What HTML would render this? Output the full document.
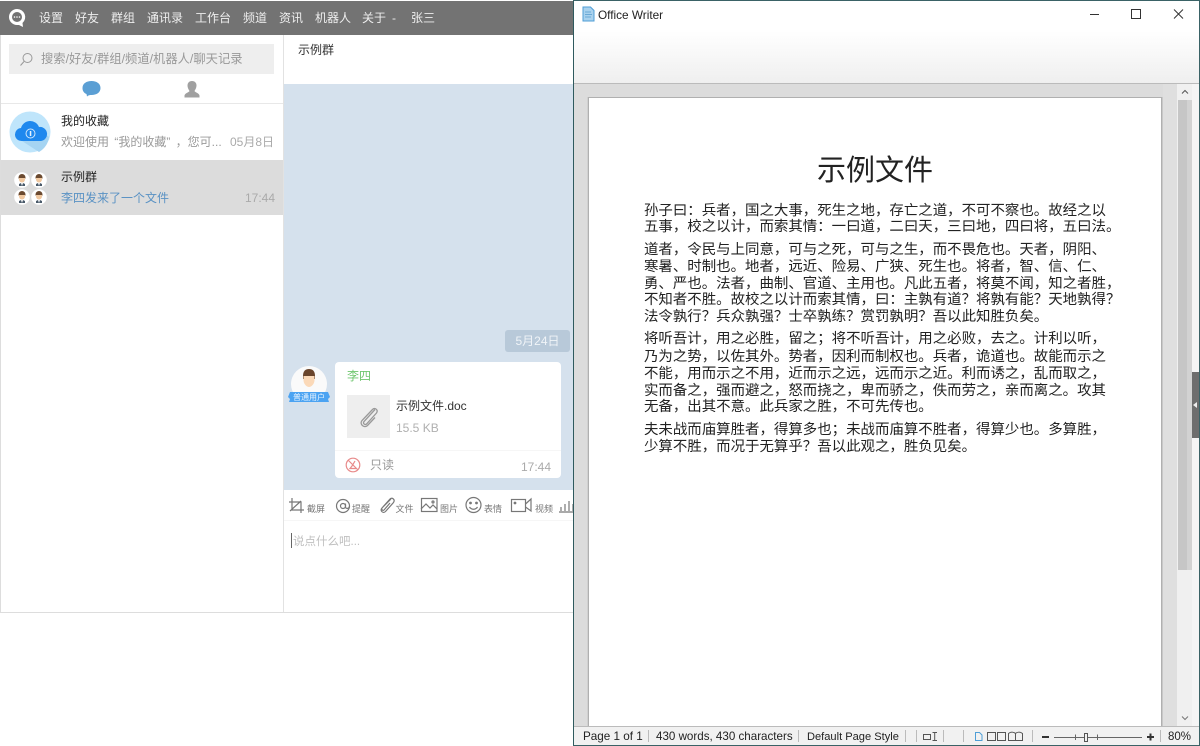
<!DOCTYPE html>
<html><head><meta charset="utf-8"><style>
html,body{margin:0;padding:0;background:#fff}
body{width:1200px;height:746px;position:relative;overflow:hidden;font-family:"Liberation Sans","Noto Sans CJK SC",sans-serif}
.a{position:absolute;white-space:nowrap}
.n{top:10px;font-size:12px;line-height:16px;color:#eee}
.l{left:644px;font-size:14.44px;line-height:17px;color:#222}
.t{font-size:9px;color:#777;top:504px;line-height:10px}
</style></head><body>
<div class="a" style="left:0;top:1px;width:574px;height:34px;background:#737373"></div>
<svg class="a" style="left:8px;top:8px" width="20" height="22" viewBox="0 0 20 22"><path d="M9 1a8 8 0 1 0 0 16l2 0 4 2-.5-4a8 8 0 0 0-5.500-14z" fill="#fff"/><circle cx="9" cy="9" r="5" fill="#737373"/><circle cx="6.500" cy="9" r=".8" fill="#fff"/><circle cx="9" cy="9" r=".8" fill="#fff"/><circle cx="11.500" cy="9" r=".8" fill="#fff"/></svg>
<div class="a n" style="left:39px">设置</div><div class="a n" style="left:75px">好友</div><div class="a n" style="left:111px">群组</div><div class="a n" style="left:147px">通讯录</div><div class="a n" style="left:195px">工作台</div><div class="a n" style="left:243px">频道</div><div class="a n" style="left:279px">资讯</div><div class="a n" style="left:315px">机器人</div><div class="a n" style="left:362px">关于</div><div class="a n" style="left:392px">-</div><div class="a n" style="left:411px">张三</div>

<div class="a" style="left:0;top:35px;width:1px;height:577px;background:#ddd"></div>
<div class="a" style="left:283px;top:35px;width:1px;height:577px;background:#e2e2e2"></div>
<div class="a" style="left:0;top:612px;width:574px;height:1px;background:#ddd"></div>
<div class="a" style="left:9px;top:44px;width:265px;height:30px;background:#eee"></div>
<svg class="a" style="left:19px;top:52px" width="15" height="15" viewBox="0 0 15 15" fill="none" stroke="#999" stroke-width="1"><circle cx="8.500" cy="6" r="4.500"/><path d="M5 9.500 1.500 13.500"/></svg>
<div class="a" style="left:41px;top:51px;font-size:12.300px;line-height:17px;color:#999">搜索/好友/群组/频道/机器人/聊天记录</div>
<svg class="a" style="left:81px;top:80px" width="21" height="18" viewBox="0 0 21 18"><path d="M10.500 1C15.500 1 19.500 3.500 19.500 8s-4 7-9 7c-1.500 0-3 0-4.500 1.500l-.5-2.500C3 13 1.500 11 1.500 8 1.500 3.500 5.500 1 10.500 1z" fill="#5b9fd4"/></svg>
<svg class="a" style="left:184px;top:81px" width="16" height="17" viewBox="0 0 16 17"><path d="M8 0c3 0 4.500 2 4.500 4.500S11 9 10.500 10c0 1 4.500 2 5 4.500V16.500H.5V14.500c.5-2.500 5-3.500 5-4.500C5 9 3.500 7 3.500 4.500S5 0 8 0z" fill="#a0a0a0"/></svg>
<div class="a" style="left:1px;top:103px;width:282px;height:1px;background:#e8e8e8"></div>
<svg class="a" style="left:9px;top:111px" width="42" height="42" viewBox="0 0 42 42"><circle cx="21" cy="21" r="20.500" fill="#bfe5fb"/><path d="M13 30 30 41 A20.500 20.500 0 0 0 40 26L33 20Z" fill="#a5d4f2"/><path d="M13 30a6.500 6.500 0 0 1-1-13 9.500 9.500 0 0 1 18-1 7 7 0 0 1 2 14z" fill="#1e88ee"/><circle cx="21.500" cy="22.500" r="4.500" fill="none" stroke="#cfe6fb" stroke-width="1"/><rect x="20.800" y="20" width="1.500" height="5" fill="#eaf4fd"/></svg>
<div class="a" style="left:61px;top:113px;font-size:12px;line-height:17px;color:#222">我的收藏</div>
<div class="a" style="left:61px;top:134px;font-size:12px;line-height:17px;color:#9a9a9a;word-spacing:2px">欢迎使用 “我的收藏” ，您可...</div>
<div class="a" style="left:230px;top:134px;font-size:12px;line-height:17px;color:#aaa">05月8日</div>

<div class="a" style="left:1px;top:160px;width:282px;height:55px;background:#dcdcdc"></div>
<svg class="a" style="left:13px;top:171px" width="35" height="35" viewBox="0 0 35 35">
<defs><g id="p"><circle cx="8" cy="8" r="7.800" fill="#fff"/><path d="M4.500 5.500a3.500 3.500 0 0 1 7 0v1h-7z" fill="#6b4a30"/><path d="M5 6h6v1.500a3 3 0 0 1-6 0z" fill="#f0c8a0"/><path d="M5 12l2-1 1 3 1-3 2 1 0 2h-6z" fill="#4a5a6a"/></g></defs>
<use href="#p" x="1" y="1"/><use href="#p" x="18" y="1"/><use href="#p" x="1" y="18"/><use href="#p" x="18" y="18"/></svg>
<div class="a" style="left:61px;top:169px;font-size:12px;line-height:17px;color:#222">示例群</div>
<div class="a" style="left:61px;top:190px;font-size:12px;line-height:17px;color:#5a92c4">李四发来了一个文件</div>
<div class="a" style="left:245px;top:190px;font-size:12px;line-height:17px;color:#aaa">17:44</div>

<div class="a" style="left:298px;top:42px;font-size:12px;line-height:17px;color:#333">示例群</div>
<div class="a" style="left:284px;top:84px;width:290px;height:406px;background:#d5e1ed"></div>
<div class="a" style="left:505px;top:330px;width:65px;height:22px;background:#b8c9d9;border-radius:3px;font-size:12px;line-height:22px;text-align:center;color:#f0f4f8">5月24日</div>

<svg class="a" style="left:288px;top:365px" width="44" height="40" viewBox="0 0 44 40">
<circle cx="21" cy="19" r="18" fill="#fafafa"/><path d="M15 11c0-5 2.500-7 6-7s6 2 6 7v3H15z" fill="#6a452c"/><path d="M15.500 11c3 0 8 0 11 0v4c0 4-3 7-5.500 7s-5.500-3-5.500-7z" fill="#fbd9b8"/>
<path d="M2 27 0 32 2 34 1 37H41L40 34 42 32 40 27z" fill="#4ba3f2"/><text x="21" y="35" font-size="8" text-anchor="middle" fill="#e8f4ff" font-family="Liberation Sans,Noto Sans CJK SC,sans-serif">普通用户</text></svg>
<div class="a" style="left:335px;top:362px;width:226px;height:116px;background:#fff;border-radius:4px"></div>
<div class="a" style="left:347px;top:368px;font-size:12px;line-height:17px;color:#6ec66e">李四</div>
<div class="a" style="left:347px;top:395px;width:43px;height:43px;background:#eee"></div>
<svg class="a" style="left:358px;top:406px" width="22" height="22" viewBox="0 0 22 22" fill="none" stroke="#999" stroke-width="1.300"><path d="M17 3.500 6 15.500c-1.500 2 1 4 2.500 2.500L18.500 7c2-3-1.500-6-4-3.500L4 14.500c-3 4 2.500 8 5.500 5L17 11.500"/></svg>
<div class="a" style="left:396px;top:398px;font-size:12px;line-height:17px;color:#333">示例文件.doc</div>
<div class="a" style="left:396px;top:420px;font-size:12px;line-height:17px;color:#b0b0b0">15.5 KB</div>
<div class="a" style="left:335px;top:450px;width:226px;height:1px;background:#f6f6f6"></div>
<svg class="a" style="left:345px;top:457px" width="16" height="16" viewBox="0 0 16 16" fill="none" stroke="#e88a8a" stroke-width="1.200"><circle cx="8" cy="8" r="6.800"/><path d="M3 3 13 13M10 4 7 9 5 11.500H11"/></svg>
<div class="a" style="left:370px;top:457px;font-size:12px;line-height:17px;color:#999">只读</div>
<div class="a" style="left:521px;top:459px;font-size:12px;line-height:17px;color:#aaa">17:44</div>

<svg class="a" style="left:284px;top:494px" width="290" height="24" viewBox="0 0 290 24" fill="none" stroke="#777" stroke-width="1.200">
<path d="M8 4V16H20M5 8H17V19M6 17 17 7"/>
<circle cx="59" cy="12" r="6.500"/><circle cx="59" cy="12" r="2.500"/><path d="M61.500 9.500V13c0 2 4 2 4-1"/>
<path d="M107 5 98 14c-2.500 2.500 1 6 3.500 3.500l8-9c2-3-1.500-5.500-3.500-3.500l-8 9c-1 1.500 1 3 2 2l6-7"/>
<rect x="137.500" y="4.500" width="15.500" height="13"/><path d="M137 15 142 10 146 14 149 11 153 15"/><circle cx="149" cy="8" r="1"/>
<circle cx="189.500" cy="11" r="7.500"/><circle cx="186.500" cy="9" r=".8" fill="#777"/><circle cx="192.500" cy="9" r=".8" fill="#777"/><path d="M185.500 13c2 3 6 3 8 0"/>
<rect x="227.500" y="5.500" width="14" height="12"/><path d="M241.500 10 247 5V17L241.500 13"/><circle cx="231" cy="9" r=".8" fill="#777"/>
<path d="M275 18H290M277 17V13M281 17V10M285 17V7M289 17V10"/></svg>
<div class="a t" style="left:307px">截屏</div><div class="a t" style="left:352px">提醒</div><div class="a t" style="left:395.500px">文件</div><div class="a t" style="left:440px">图片</div><div class="a t" style="left:484px">表情</div><div class="a t" style="left:535px">视频</div>
<div class="a" style="left:284px;top:520px;width:290px;height:1px;background:#f6f6f6"></div>
<div class="a" style="left:291px;top:533px;width:1px;height:15px;background:#666"></div>
<div class="a" style="left:293px;top:534px;font-size:11.500px;line-height:17px;color:#c0c0c0">说点什么吧...</div>

<!-- writer window -->
<div class="a" style="left:573px;top:0;width:627px;height:746px;background:#dcdcdc"></div>
<div class="a" style="left:574px;top:1px;width:625px;height:82px;background:linear-gradient(#fff 0,#fff 30px,#efefef 82px)"></div>
<div class="a" style="left:573px;top:0;width:1px;height:746px;background:#2f5a5e"></div>
<div class="a" style="left:573px;top:0;width:627px;height:1px;background:#3a6266"></div>
<div class="a" style="left:1199px;top:0;width:1px;height:746px;background:#3a6266"></div>
<div class="a" style="left:573px;top:745px;width:627px;height:1px;background:#3a6266"></div>
<svg class="a" style="left:582px;top:6px" width="13" height="16" viewBox="0 0 13 16"><path d="M1 1H8.500L12 4.500V15H1z" fill="#a9d2ee" stroke="#4f9ed6"/><path d="M3 6H9M3 8.500H10M3 11H9" stroke="#6aa9d6"/></svg>
<div class="a" style="left:598px;top:7px;font-size:11.800px;line-height:16px;color:#222">Office Writer</div>
<svg class="a" style="left:1080px;top:5px" width="110" height="18" viewBox="0 0 110 18" fill="none" stroke="#333" stroke-width="1"><path d="M10 9.500H19"/><rect x="51.500" y="4.500" width="9" height="9"/><path d="M94 4.500 103 13.500M103 4.500 94 13.500"/></svg>
<div class="a" style="left:574px;top:83px;width:625px;height:1px;background:#bbb"></div>

<div class="a" style="left:588px;top:97px;width:574px;height:640px;background:#fff;border:1px solid #b0b0b0;border-bottom:0;box-sizing:border-box;box-shadow:-1px 0 0 #d0d0d0,1px 0 0 #c8c8c8"></div>
<div class="a" style="left:1163px;top:84px;width:14px;height:642px;background:#dfdfdf"></div>
<div class="a" style="left:1177px;top:84px;width:15px;height:642px;background:#f0f0f0"></div>
<div class="a" style="left:1178px;top:100px;width:9px;height:470px;background:#c6c6c6"></div>
<div class="a" style="left:1187px;top:100px;width:5px;height:470px;background:#d2d2d2"></div>
<svg class="a" style="left:1179px;top:88px" width="12" height="8" fill="none" stroke="#555"><path d="M3 5.500 6 2.500 9 5.500"/></svg>
<svg class="a" style="left:1179px;top:714px" width="12" height="8" fill="none" stroke="#777"><path d="M3 2.500 6 5.500 9 2.500"/></svg>
<div class="a" style="left:1192px;top:84px;width:7px;height:642px;background:#f5f5f5"></div>
<div class="a" style="left:1192px;top:372px;width:7px;height:66px;background:#6e6e6e"></div>
<div class="a" style="left:1193px;top:402px;width:0;height:0;border:3px solid transparent;border-right:4px solid #eee;border-left:0"></div>

<div class="a" style="left:817px;top:151px;font-size:29px;line-height:40px;color:#222">示例文件</div>
<div class="a l" style="top:203px">孙子曰：兵者，国之大事，死生之地，存亡之道，不可不察也。故经之以</div>
<div class="a l" style="top:219px">五事，校之以计，而索其情：一曰道，二曰天，三曰地，四曰将，五曰法。</div>
<div class="a l" style="top:242px">道者，令民与上同意，可与之死，可与之生，而不畏危也。天者，阴阳、</div>
<div class="a l" style="top:259px">寒暑、时制也。地者，远近、险易、广狭、死生也。将者，智、信、仁、</div>
<div class="a l" style="top:276px">勇、严也。法者，曲制、官道、主用也。凡此五者，将莫不闻，知之者胜，</div>
<div class="a l" style="top:292px">不知者不胜。故校之以计而索其情，曰：主孰有道？将孰有能？天地孰得？</div>
<div class="a l" style="top:309px">法令孰行？兵众孰强？士卒孰练？赏罚孰明？吾以此知胜负矣。</div>
<div class="a l" style="top:331px">将听吾计，用之必胜，留之；将不听吾计，用之必败，去之。计利以听，</div>
<div class="a l" style="top:349px">乃为之势，以佐其外。势者，因利而制权也。兵者，诡道也。故能而示之</div>
<div class="a l" style="top:366px">不能，用而示之不用，近而示之远，远而示之近。利而诱之，乱而取之，</div>
<div class="a l" style="top:383px">实而备之，强而避之，怒而挠之，卑而骄之，佚而劳之，亲而离之。攻其</div>
<div class="a l" style="top:399px">无备，出其不意。此兵家之胜，不可先传也。</div>
<div class="a l" style="top:422px">夫未战而庙算胜者，得算多也；未战而庙算不胜者，得算少也。多算胜，</div>
<div class="a l" style="top:439px">少算不胜，而况于无算乎？吾以此观之，胜负见矣。</div>

<div class="a" style="left:574px;top:726px;width:625px;height:19px;background:#f1f1f1;border-top:1px solid #bbb;box-sizing:border-box"></div>
<div style="line-height:16px;color:#222">
<div class="a" style="left:583px;top:729px;font-size:11.700px">Page 1 of 1</div>
<div class="a" style="left:656px;top:729px;font-size:11.600px">430 words, 430 characters</div>
<div class="a" style="left:807px;top:729px;font-size:11.100px">Default Page Style</div>
<div class="a" style="left:1168px;top:729px;font-size:11.500px">80%</div>
</div>
<svg class="a" style="left:574px;top:727px" width="625" height="18" viewBox="0 0 625 18" fill="none" stroke="#bbb">
<path d="M74.500 3V15M224.500 3V15M331.500 3V15M342.500 3V15M369.500 3V15M389.500 3V15M458.500 3V15M586.500 3V15"/>
<rect x="349.500" y="7.500" width="7" height="5" stroke="#555"/><path d="M358.500 5.500H363M360.700 5.500V13.500M358.500 13.500H363" stroke="#555"/>
<path d="M401.500 5.500H405.500L408 8V13.500H401.500z" stroke="#4f9ed6"/>
<path d="M413.500 5.500H421.500V13.500H413.500zM423.500 5.500H431.500V13.500H423.500zM434.500 6.500C437 4.500 440 5 441.500 6.500 443 5 446 4.500 448.500 6.500V13.500H434.500zM441.500 6.500V13.500" stroke="#555"/>
<path d="M468 10H475M573 10H580M576.500 6.500V13.500" stroke="#333" stroke-width="2"/>
<path d="M480 10.500H568M501.500 7.500V13M523.500 7.500V13" stroke="#666"/>
<rect x="510.500" y="6.500" width="3" height="8" stroke="#555" fill="#f1f1f1"/>
</svg>
</body></html>
